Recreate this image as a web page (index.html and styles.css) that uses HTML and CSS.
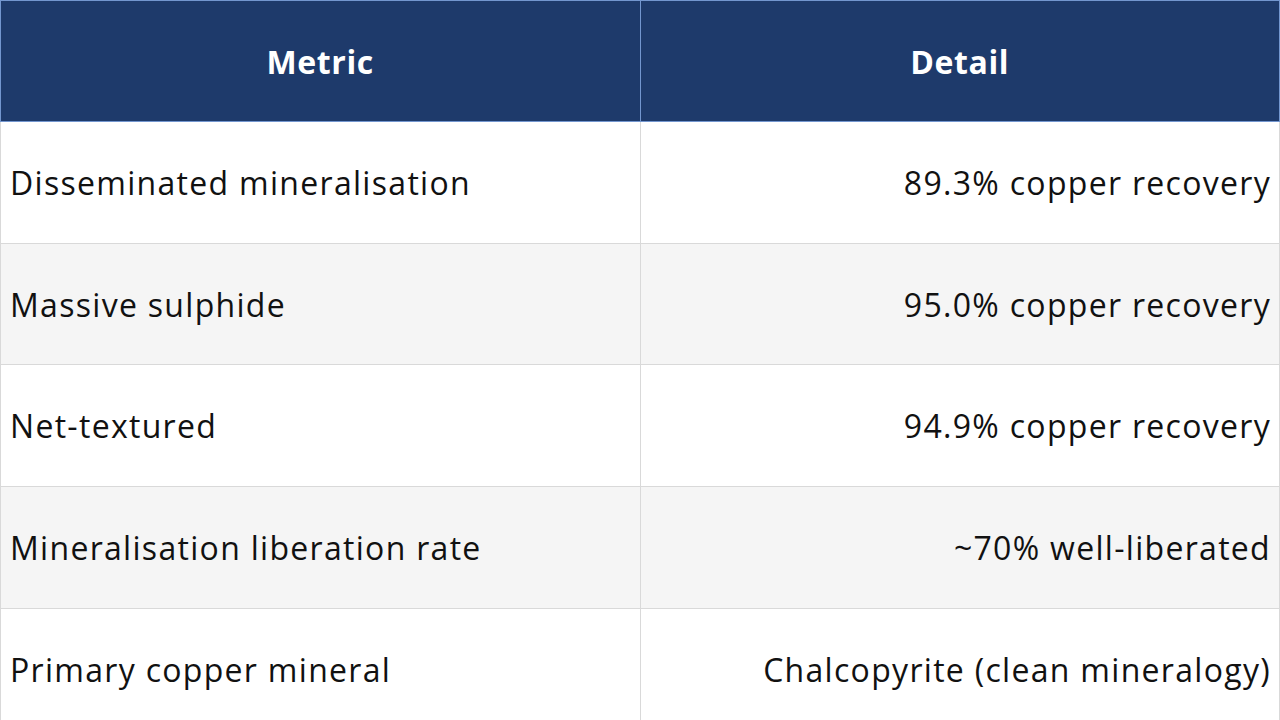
FILE: index.html
```html
<!DOCTYPE html>
<html lang="en">
<head>
<meta charset="utf-8">
<title>Metrics</title>
<link rel="stylesheet" href="styles.css">
</head>
<body>
<table class="data">
  <thead>
    <tr class="head-row">
      <th>Metric</th>
      <th>Detail</th>
    </tr>
  </thead>
  <tbody>
    <tr class="row"><td>Disseminated mineralisation</td><td class="val">89.3% copper recovery</td></tr>
    <tr class="row alt"><td>Massive sulphide</td><td class="val">95.0% copper recovery</td></tr>
    <tr class="row"><td>Net-textured</td><td class="val">94.9% copper recovery</td></tr>
    <tr class="row alt"><td>Mineralisation liberation rate</td><td class="val">~70% well-liberated</td></tr>
    <tr class="row"><td>Primary copper mineral</td><td class="val">Chalcopyrite (clean mineralogy)</td></tr>
  </tbody>
</table>
</body>
</html>
```

FILE: styles.css
```css
html, body {
  margin: 0;
  padding: 0;
  background: #ffffff;
  overflow: hidden;
}

.data {
  width: 1280px;
  border-collapse: collapse;
  table-layout: fixed;
  font-family: "Open Sans", "Noto Sans", sans-serif;
  font-size: 32px;
  color: #111111;
}

.head-row th {
  height: 121px;
  padding: 0 10px;
  box-sizing: border-box;
  background: #1e3a6b;
  color: #ffffff;
  font-weight: 700;
  letter-spacing: 0.6px;
  text-align: center;
  border: 1px solid #7396cf;
}

.row td {
  height: 121.7px;
  padding: 0 9px;
  box-sizing: border-box;
  background: #ffffff;
  border: 1px solid #d9d9d9;
  letter-spacing: 1.3px;
  text-align: left;
  vertical-align: middle;
}

.row.alt td {
  background: #f5f5f5;
}

.row td.val {
  text-align: right;
  padding-right: 8px;
}
```
